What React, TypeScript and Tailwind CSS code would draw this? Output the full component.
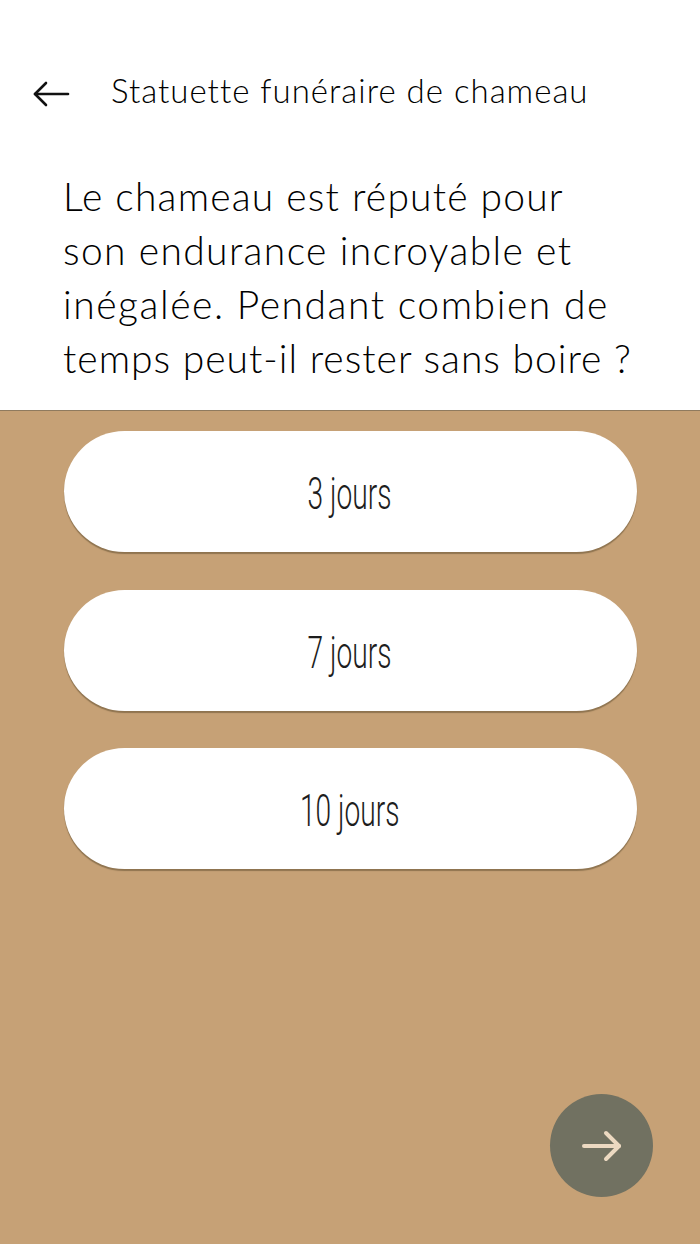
import React from "react";

const Answer = ({ label }: { label: string }) => (
  <div className="h-[121px] w-[573px] shrink-0 rounded-[61px] bg-white shadow-[0_2px_1px_#8f7450] flex items-center justify-center">
    <span className="inline-block scale-x-[0.64] font-['Roboto',sans-serif] font-light text-[44px] leading-none text-[#1d1d1d] whitespace-nowrap pt-[5px] -ml-[2px]">
      {label}
    </span>
  </div>
);

export default function App() {
  return (
    <div className="w-[700px] h-[1244px] flex flex-col bg-[#c6a176] overflow-hidden font-['Lato',sans-serif]">
      <div className="h-[411px] shrink-0 bg-white border-b border-[#8f7a5e] flex flex-col">
        <div className="h-[183px] shrink-0 flex items-start pt-[70px] pl-[33px]">
          <svg width="38" height="28" viewBox="0 0 38 28" fill="none" stroke="#111" strokeWidth="2.6" strokeLinecap="round" strokeLinejoin="round" className="mt-[10px]">
            <path d="M2 14H35" />
            <path d="M13 3L2 14L13 25" />
          </svg>
          <span className="ml-[40px] text-[33px] leading-[40px] font-light text-black tracking-[1px] whitespace-nowrap">
            Statuette funéraire de chameau
          </span>
        </div>
        <div className="pl-[63px] text-[39px] leading-[54px] font-light text-black whitespace-nowrap -mt-[14px]">
          <div className="tracking-[1.2px]">Le chameau est réputé pour</div>
          <div className="tracking-[1.35px]">son endurance incroyable et</div>
          <div className="tracking-[1.55px]">inégalée. Pendant combien de</div>
          <div className="tracking-[1px]">temps peut-il rester sans boire ?</div>
        </div>
      </div>
      <div className="flex-1 relative pl-[64px] pt-[20px] flex flex-col gap-[37.5px]">
        <Answer label="3 jours" />
        <Answer label="7 jours" />
        <Answer label="10 jours" />
        <div className="absolute left-[550px] top-[683px] w-[103px] h-[103px] rounded-full bg-[#717161] flex items-center justify-center">
          <svg width="42" height="34" viewBox="0 0 42 34" fill="none" stroke="#ecd9c1" strokeWidth="4" strokeLinecap="round" strokeLinejoin="round">
            <path d="M3 17H38" />
            <path d="M25 4L38 17L25 30" />
          </svg>
        </div>
      </div>
    </div>
  );
}
